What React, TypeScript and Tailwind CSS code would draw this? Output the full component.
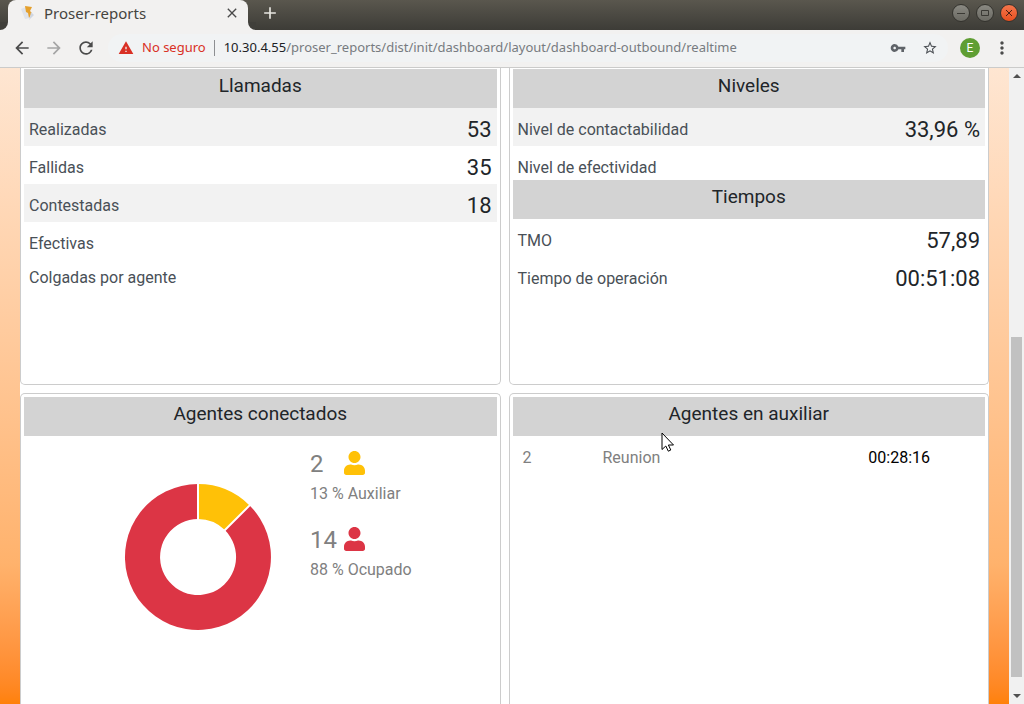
import type { ReactNode } from "react";
import { FaUser } from "react-icons/fa";
import { MdArrowBack, MdArrowForward, MdRefresh, MdWarning, MdVpnKey, MdStarBorder, MdMoreVert, MdClose, MdAdd } from "react-icons/md";

type Metric = { label: string; value?: string };

const calls: Metric[] = [
  { label: "Realizadas", value: "53" },
  { label: "Fallidas", value: "35" },
  { label: "Contestadas", value: "18" },
  { label: "Efectivas" },
  { label: "Colgadas por agente" },
];
const levels: Metric[] = [
  { label: "Nivel de contactabilidad", value: "33,96 %" },
  { label: "Nivel de efectividad" },
];
const times: Metric[] = [
  { label: "TMO", value: "57,89" },
  { label: "Tiempo de operación", value: "00:51:08" },
];

function Heading({ children }: { children: ReactNode }) {
  return (
    <h2 className="bg-[#d3d3d3] pt-1 pb-[9px] text-center text-[19px] leading-[26px] text-[#212529]">{children}</h2>
  );
}

function Metrics({ rows, striped = false }: { rows: Metric[]; striped?: boolean }) {
  return (
    <table className="w-full border-collapse">
      <tbody>
        {rows.map((row, i) => (
          <tr key={row.label} className={striped && i % 2 === 0 && row.value ? "bg-[#f2f2f2]" : ""}>
            <th scope="row" className="pt-[10px] pl-[5px] text-left align-top font-normal leading-6 text-[#495057]">
              {row.label}
            </th>
            <td className="pr-[5px] text-right align-top text-[22px] text-[#212529]">
              {row.value && <div className="pt-[6px] leading-8">{row.value}</div>}
            </td>
          </tr>
        ))}
      </tbody>
    </table>
  );
}

function Donut() {
  return (
    <svg viewBox="0 0 148 148" className="h-[148px] w-[148px]" role="img" aria-label="Agentes conectados">
      <path d="M125.6 22.4A73 73 0 1 1 74 1V36A38 38 0 1 0 100.9 47.1Z" fill="#dc3545" />
      <path d="M74 1A73 73 0 0 1 125.6 22.4L100.9 47.1A38 38 0 0 0 74 36Z" fill="#ffc107" />
      <path d="M74 0V37M126.4 21.6L100.2 47.8" stroke="#fff" strokeWidth="2" />
    </svg>
  );
}

function AgentCount({ count, label, color }: { count: number; label: string; color: string }) {
  return (
    <div className="text-[#808080]">
      <div className="flex h-9 items-center">
        <span className="w-[34px] text-2xl">{count}</span>
        <span className="pb-[2px]">
          <FaUser className={`h-6 w-[21px] ${color}`} />
        </span>
      </div>
      <p className="leading-6">{label}</p>
    </div>
  );
}

function WindowControls() {
  return (
    <div className="flex gap-[6px] pt-1 pr-[6px]">
      <button aria-label="Minimizar" className="grid size-[18px] place-items-center rounded-full border border-[#34332e] bg-linear-to-b from-[#8a8982] to-[#6b6a63] text-[#3a3934]">
        <svg viewBox="0 0 10 10" className="size-[10px]" stroke="currentColor"><path d="M1 5.5H9" /></svg>
      </button>
      <button aria-label="Maximizar" className="grid size-[18px] place-items-center rounded-full border border-[#34332e] bg-linear-to-b from-[#8a8982] to-[#6b6a63] text-[#3a3934]">
        <svg viewBox="0 0 10 10" className="size-[10px]" fill="none" stroke="currentColor"><path d="M1.5 2.5H8.5V7.5H1.5Z" /></svg>
      </button>
      <button aria-label="Cerrar" className="grid size-[18px] place-items-center rounded-full border border-[#34332e] bg-linear-to-b from-[#f4764b] to-[#e94e1d] text-[#4a2014]">
        <svg viewBox="0 0 10 10" className="size-[10px]" stroke="currentColor"><path d="M2 2L8 8M8 2L2 8" /></svg>
      </button>
    </div>
  );
}

function Browser() {
  return (
    <header className="shrink-0 font-['Noto_Sans','Open_Sans',sans-serif]">
      <div className="flex h-[30px] justify-between bg-linear-to-b from-[#5a574e] to-[#3d3c37]">
        <div className="flex">
          <span className="size-2 self-end bg-[#f2f1f0]">
            <span className="block size-full rounded-br-lg bg-[#403f3a]" />
          </span>
          <div className="flex w-60 items-center rounded-t-lg bg-[#f2f1f0] pr-2 pb-1 pl-3">
            <svg viewBox="0 0 16 16" className="size-4">
              <path d="M1 4L6 2L10 13L5 14Z" fill="#dfe3ea" />
              <path d="M5 1L12 2L10 6L12 8L9 13L8 8L6 7Z" fill="#e5a02c" />
              <path d="M11 7L14 10L9 15L10 12Z" fill="#cfd6e2" />
            </svg>
            <span className="flex-1 pl-2 text-[15px] leading-5 text-[#45443f]">Proser-reports</span>
            <button aria-label="Cerrar pestaña"><MdClose className="size-4 text-[#4a4a4a]" /></button>
          </div>
          <span className="size-2 self-end bg-[#f2f1f0]">
            <span className="block size-full rounded-bl-lg bg-[#403f3a]" />
          </span>
          <button aria-label="Nueva pestaña" className="ml-1 pb-1 text-[#e8e6e1]"><MdAdd className="size-5" /></button>
        </div>
        <WindowControls />
      </div>
      <div className="flex h-[38px] items-center border-b border-[#cbcbca] bg-[#f2f1f0] px-3 pb-px text-[#4b4b4b]">
        <nav className="flex gap-3">
          <button aria-label="Atrás"><MdArrowBack className="size-5" /></button>
          <button aria-label="Adelante" className="text-[#a5a5a5]"><MdArrowForward className="size-5" /></button>
          <button aria-label="Recargar"><MdRefresh className="size-5" /></button>
        </nav>
        <div className="ml-3 flex h-7 flex-1 items-center rounded-full bg-[#f1f3f4] pl-[10px] text-[13px]">
          <MdWarning className="size-4 text-[#d93025]" />
          <span className="pl-2 text-[#d93025]">No seguro</span>
          <span className="mr-[9px] ml-2 h-4 w-px bg-[#8d8f92]" />
          <span className="flex-1 whitespace-nowrap text-[#777b80]">
            <span className="text-[#202124]">10.30.4.55</span>/proser_reports/dist/init/dashboard/layout/dashboard-outbound/realtime
          </span>
          <button aria-label="Contraseñas"><MdVpnKey className="size-4 text-[#5f6368]" /></button>
          <button aria-label="Marcador" className="mr-[10px] ml-4"><MdStarBorder className="size-4 text-[#4b4f54]" /></button>
        </div>
        <button aria-label="Perfil" className="ml-3 size-5 rounded-full bg-[#5f9e33] font-[Roboto,sans-serif] text-xs text-white">E</button>
        <button aria-label="Menú" className="ml-3"><MdMoreVert className="size-5" /></button>
      </div>
    </header>
  );
}

export default function App() {
  return (
    <div className="relative flex h-screen flex-col overflow-hidden">
      <Browser />
      <div className="flex min-h-0 flex-1">
        <main className="min-w-0 flex-1 bg-linear-to-b from-[#fee6d2] via-[#ffb26c] via-78% to-[#ff8108] px-5 font-[Roboto,sans-serif] text-base">
          <div className="grid h-full grid-cols-2 grid-rows-[317px_1fr] gap-2 bg-white">
            <section className="rounded-b-[5px] border border-t-0 border-[#ccc] px-[3px] pt-px">
              <Heading>Llamadas</Heading>
              <Metrics rows={calls} striped />
            </section>
            <section className="rounded-b-[5px] border border-t-0 border-[#ccc] px-[3px] pt-px">
              <Heading>Niveles</Heading>
              <Metrics rows={levels} striped />
              <Heading>Tiempos</Heading>
              <Metrics rows={times} />
            </section>
            <section className="rounded-t-[5px] border border-b-0 border-[#ccc] p-[3px]">
              <Heading>Agentes conectados</Heading>
              <div className="flex pt-[10px] pl-[100px]">
                <div className="pt-[37px]"><Donut /></div>
                <div className="flex flex-col gap-4 pl-[38px]">
                  <AgentCount count={2} label="13 % Auxiliar" color="text-[#ffc107]" />
                  <AgentCount count={14} label="88 % Ocupado" color="text-[#dc3545]" />
                </div>
              </div>
            </section>
            <section className="rounded-t-[5px] border border-b-0 border-[#ccc] p-[3px]">
              <Heading>Agentes en auxiliar</Heading>
              <table className="w-full table-fixed">
                <tbody>
                  <tr className="text-[#808080]">
                    <td className="w-20 pt-[10px] pl-[10px]">2</td>
                    <td className="pt-[10px] pl-[10px]">Reunion</td>
                    <td className="pt-[10px] pr-[55px] text-right text-black">00:28:16</td>
                  </tr>
                </tbody>
              </table>
            </section>
          </div>
        </main>
        <div className="flex w-[15px] shrink-0 flex-col items-center bg-[#f1f1f1] py-1">
          <svg viewBox="0 0 8 8" className="size-2 shrink-0" fill="#505050"><path d="M0 6L4 2L8 6Z" /></svg>
          <div className="flex min-h-0 w-[11px] flex-1 flex-col">
            <div className="flex-[257]" />
            <div className="flex-[340] bg-[#c1c1c1]" />
            <div className="flex-[15]" />
          </div>
          <svg viewBox="0 0 8 8" className="size-2 shrink-0" fill="#505050"><path d="M0 2L4 6L8 2Z" /></svg>
        </div>
      </div>
      <svg viewBox="0 0 14 20" className="pointer-events-none absolute top-[432px] left-[661px] h-5 w-[14px]">
        <path d="M1 1V17.5L4.8 14L7.3 19.2L9.8 18L7.4 13H12.5Z" fill="#fff" stroke="#000" />
      </svg>
    </div>
  );
}
